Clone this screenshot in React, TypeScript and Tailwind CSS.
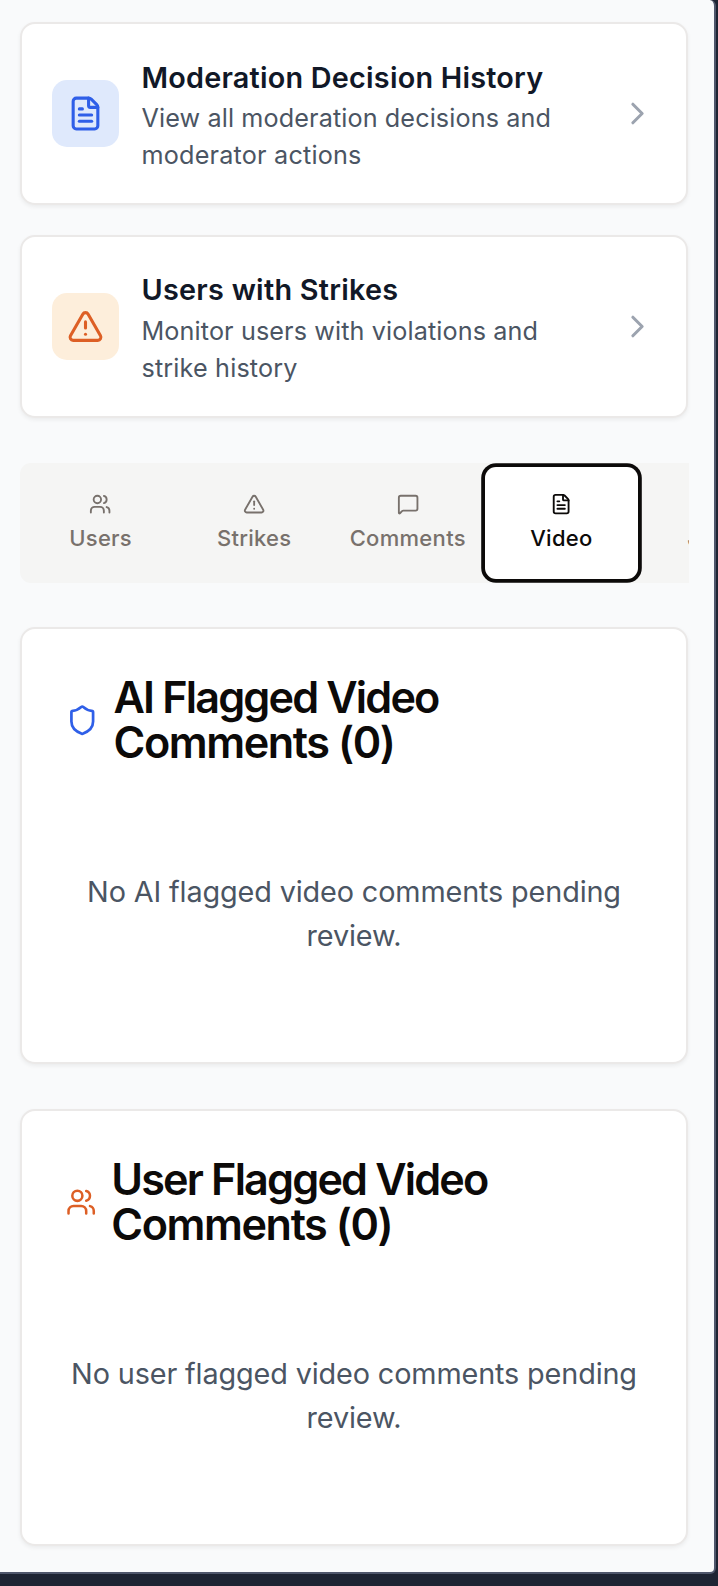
import type { ReactNode } from "react";
import { ChevronRight, FileText, MessageSquare, Shield, TriangleAlert, Users } from "lucide-react";

const card = "rounded-[15px] border-2 border-[#ebe9e8] bg-white shadow-[0_2px_4px_rgba(0,0,0,0.06)]";

function LinkCard({ icon, tint, title, titleClass, lines }: { icon: ReactNode; tint: string; title: string; titleClass: string; lines: { text: string; cls: string }[] }) {
  return (
    <a className={`${card} flex h-[183px] items-center pl-[29.5px] pr-[30px]`}>
      <div className={`flex size-[67px] shrink-0 items-center justify-center rounded-[15px] ${tint}`}>{icon}</div>
      <div className="ml-[23px] flex-1 pt-[3px] whitespace-nowrap">
        <h3 className={`text-[28.8px] font-semibold text-[#111827] ${titleClass}`}>{title}</h3>
        {lines.map((l) => (
          <p key={l.text} className={`text-[25.2px] leading-[37px] text-[#4b5563] ${l.cls}`}>{l.text}</p>
        ))}
      </div>
      <ChevronRight className="size-[37px] text-[#9ca3af]" />
    </a>
  );
}

function Tab({ icon, label, active, cls }: { icon: ReactNode; label: string; active?: boolean; cls: string }) {
  return (
    <button
      className={`flex h-[112px] w-[153.6px] shrink-0 flex-col items-center rounded-[11px] pt-[26px] text-[22px] font-medium ${
        active ? "bg-white text-[#0c0a09] ring-[3.8px] ring-[#0c0a09]" : "text-[#78716c]"
      }`}
    >
      {icon}
      <span className={`mt-[8px] leading-[30px] whitespace-nowrap ${cls}`}>{label}</span>
    </button>
  );
}

function FlaggedCard({ icon, title, message }: { icon: ReactNode; title: [string, string]; message: [string, string] }) {
  return (
    <section className={`${card} h-[437px] px-[44px] pt-[46px]`}>
      <div className="flex items-center gap-[15px]">
        {icon}
        <h2 className="text-[43.2px] leading-[45px] font-semibold whitespace-nowrap text-[#0c0a09]">
          <span className="block tracking-[-1.85px]">{title[0]}</span>
          <span className="block tracking-[-1.42px]">{title[1]}</span>
        </h2>
      </div>
      <p className="mt-[104.5px] text-center text-[28.8px] leading-[44.6px] tracking-[-0.13px] whitespace-nowrap text-[#4b5563]">
        {message[0]}
        <br />
        {message[1]}
      </p>
    </section>
  );
}

export default function App() {
  return (
    <div className="h-[1586px] w-[718px] overflow-hidden bg-[#1e2433] font-[Inter,sans-serif]">
      <main className="h-[1574px] w-[716px] rounded-r-[6px] border-r-2 border-b-2 border-[#4f566b] bg-[#f9fafb] pt-[22px] pl-[20px]">
        <div className="w-[668px]">
          <div className="flex flex-col gap-[30px]">
            <LinkCard
              icon={<FileText className="size-[37px] text-[#2f5fe8]" />}
              tint="bg-[#dfe9fc]"
              title="Moderation Decision History"
              titleClass="leading-[44px] tracking-[0.22px]"
              lines={[
                { text: "View all moderation decisions and", cls: "tracking-[0.11px]" },
                { text: "moderator actions", cls: "tracking-[0.2px]" },
              ]}
            />
            <LinkCard
              icon={<TriangleAlert className="size-[37px] text-[#dd5f25]" />}
              tint="bg-[#fdeedb]"
              title="Users with Strikes"
              titleClass="mb-[2px] leading-[42px] tracking-[0.27px]"
              lines={[
                { text: "Monitor users with violations and", cls: "tracking-[0.11px]" },
                { text: "strike history", cls: "tracking-[0.15px]" },
              ]}
            />
          </div>
          <nav className="mt-[45px] flex h-[120px] w-[669px] overflow-hidden rounded-l-[11px] bg-[#f5f5f4] py-[4px] pl-[3.8px]">
            <Tab icon={<Users className="size-[22.3px]" />} label="Users" cls="tracking-[0.25px]" />
            <Tab icon={<TriangleAlert className="size-[22.3px]" />} label="Strikes" cls="tracking-[0.25px]" />
            <Tab icon={<MessageSquare className="size-[22.3px]" />} label="Comments" cls="tracking-[0.3px]" />
            <Tab icon={<FileText className="size-[22.3px]" />} label="Video" active cls="tracking-[0.25px]" />
            <Tab icon={<FileText className="size-[22.3px]" />} label="Jobs" cls="mr-[3px] tracking-[0.25px]" />
          </nav>
          <div className="mt-[44px] flex flex-col gap-[45px]">
            <FlaggedCard
              icon={<Shield className="size-[32.5px] shrink-0 text-[#2f5fe8]" />}
              title={["AI Flagged Video", "Comments (0)"]}
              message={["No AI flagged video comments pending", "review."]}
            />
            <FlaggedCard
              icon={<Users className="size-[30.3px] shrink-0 text-[#dd5f25]" />}
              title={["User Flagged Video", "Comments (0)"]}
              message={["No user flagged video comments pending", "review."]}
            />
          </div>
        </div>
      </main>
    </div>
  );
}
